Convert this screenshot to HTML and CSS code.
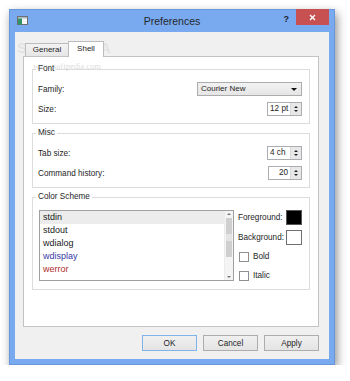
FILE: index.html
```html
<!DOCTYPE html>
<html>
<head>
<meta charset="utf-8">
<title>Preferences</title>
<link rel="stylesheet" href="styles.css">
</head>
<body>
<div class="window">
    <div class="titlebar">
        <svg class="appicon" width="11" height="9" viewBox="0 0 11 9">
            <rect x="0.5" y="0.5" width="10" height="8" fill="#f6f6f6" stroke="#6e6e6e"/>
            <rect x="1" y="1" width="9" height="1.5" fill="#a9bccc"/>
            <rect x="1" y="2.5" width="4" height="6" fill="#2f9467"/>
        </svg>
        <span class="title">Preferences</span>
        <div class="controls">
            <span class="help">?</span>
            <span class="close">
                <svg width="7" height="7" viewBox="0 0 7 7"><path d="M1 1L6 6M6 1L1 6" stroke="#fff" stroke-width="1.4"/></svg>
            </span>
        </div>
    </div>

    <div class="client">
        <div class="tabs">
            <div class="tab">General</div>
            <div class="tab selected">Shell</div>
        </div>

        <div class="pane">
            <fieldset class="group">
                <legend>Font</legend>
                <div class="row">
                    <label>Family:</label>
                    <div class="combo">Courier New<span class="arrow"></span></div>
                </div>
                <div class="row">
                    <label>Size:</label>
                    <div class="spin"><span class="value">12 pt</span><span class="spin-btns"><i class="up"></i><i class="down"></i></span></div>
                </div>
            </fieldset>

            <fieldset class="group">
                <legend>Misc</legend>
                <div class="row">
                    <label>Tab size:</label>
                    <div class="spin"><span class="value">4 ch</span><span class="spin-btns"><i class="up"></i><i class="down"></i></span></div>
                </div>
                <div class="row">
                    <label>Command history:</label>
                    <div class="spin narrow"><span class="value right">20</span><span class="spin-btns"><i class="up"></i><i class="down"></i></span></div>
                </div>
            </fieldset>

            <fieldset class="group scheme">
                <legend>Color Scheme</legend>
                <div class="scheme-body">
                    <div class="listbox">
                        <ul class="items">
                            <li class="current">stdin</li>
                            <li>stdout</li>
                            <li>wdialog</li>
                            <li class="c-display">wdisplay</li>
                            <li class="c-error">werror</li>
                        </ul>
                        <div class="scrollbar">
                            <span class="sb-up"></span>
                            <span class="sb-thumb"></span>
                            <span class="sb-down"></span>
                        </div>
                    </div>
                    <div class="props">
                        <div class="prop"><span>Foreground:</span><span class="swatch fg"></span></div>
                        <div class="prop"><span>Background:</span><span class="swatch bg"></span></div>
                        <div class="check"><span class="box"></span>Bold</div>
                        <div class="check"><span class="box"></span>Italic</div>
                    </div>
                </div>
            </fieldset>
        </div>

        <div class="actions">
            <button class="btn btn-default">OK</button>
            <button class="btn">Cancel</button>
            <button class="btn">Apply</button>
        </div>
    </div>
</div>

<div class="watermark">SOFTPEDIA</div>
<div class="watermark-url">www.softpedia.com</div>
</body>
</html>
```

FILE: styles.css
```css
body {
    margin: 0;
    background: #fff;
    font-family: "Liberation Sans", Arial, sans-serif;
    font-size: 8.2px;
    color: #1e1e1e;
}

.window {
    margin: 9px 0 0 9px;
    width: 326px;
    height: 356px;
    box-sizing: border-box;
    border: 1px solid #6897dc;
    padding: 0 5px 5px 5px;
    background: #79a9ee;
    box-shadow: 2px 4px 9px rgba(0, 0, 0, .45);
    display: flex;
    flex-direction: column;
}

/* title bar */
.titlebar {
    height: 22px;
    display: grid;
    grid-template-columns: 1fr auto 1fr;
    align-items: start;
}

.appicon {
    margin: 6px 0 0 2px;
}

.title {
    font-size: 10.5px;
    line-height: 12px;
    margin-top: 5px;
    color: #25282d;
}

.controls {
    justify-self: end;
    display: flex;
    align-items: flex-start;
}

.help {
    font-weight: bold;
    font-size: 9px;
    line-height: 10px;
    margin: 4px 7px 0 0;
    color: #1d2430;
}

.close {
    width: 33px;
    height: 16px;
    margin-top: -1px;
    background: #c75050;
    display: flex;
    align-items: center;
    justify-content: center;
}

/* client area */
.client {
    flex: 1;
    background: #f0f0f0;
    padding: 9px 10px 8px 8px;
    display: flex;
    flex-direction: column;
}

.tabs {
    display: flex;
    align-items: flex-end;
    height: 15px;
    padding-left: 2px;
    position: relative;
    z-index: 1;
}

.tab {
    box-sizing: border-box;
    height: 13px;
    width: 44px;
    border: 1px solid #bcbcbc;
    border-bottom: none;
    background: linear-gradient(#f3f3f3, #e6e6e6);
    font-size: 8px;
    line-height: 12px;
    text-align: center;
}

.tab.selected {
    width: 36px;
    height: 16px;
    margin-left: -1px;
    margin-bottom: -1px;
    background: #fff;
    line-height: 14px;
}

.pane {
    flex: 1;
    background: #fff;
    border: 1px solid #c3c3c3;
    padding: 7px 8px 0 8px;
}

/* group boxes */
.group {
    margin: 4px 0 0 0;
    border: 1px solid #dcdcdc;
    padding: 7px 7px 6px 5px;
    display: flex;
    flex-direction: column;
    gap: 4px;
}

.group:first-child {
    margin-top: 0;
}

.group legend {
    font-size: 8.2px;
    line-height: 10px;
    padding: 0 2px;
    margin-left: -2px;
}

.row {
    height: 16px;
    display: flex;
    align-items: center;
    justify-content: space-between;
}

.combo {
    box-sizing: border-box;
    width: 105px;
    height: 14px;
    border: 1px solid #acacac;
    background: linear-gradient(#f2f2f2, #e5e5e5);
    padding-left: 3px;
    font-size: 8px;
    line-height: 12px;
    display: flex;
    justify-content: space-between;
    align-items: center;
}

.combo .arrow {
    width: 0;
    height: 0;
    margin-right: 4px;
    border-left: 3px solid transparent;
    border-right: 3px solid transparent;
    border-top: 3px solid #111;
}

.spin {
    box-sizing: border-box;
    width: 35px;
    height: 14px;
    border: 1px solid #abadb3;
    background: #fff;
    display: flex;
}

.spin.narrow {
    width: 34px;
}

.spin .value {
    flex: 1;
    padding-left: 2px;
    font-size: 8.2px;
    line-height: 12px;
}

.spin .value.right {
    text-align: right;
    padding: 0 2px 0 0;
}

.spin-btns {
    width: 10px;
    border-left: 1px solid #d9d9d9;
    background: #e8e8e8;
    display: flex;
    flex-direction: column;
    justify-content: space-evenly;
    align-items: center;
}

.spin-btns i {
    width: 0;
    height: 0;
    border-left: 2px solid transparent;
    border-right: 2px solid transparent;
}

.spin-btns .up {
    border-bottom: 2px solid #222;
}

.spin-btns .down {
    border-top: 2px solid #222;
}

/* color scheme */
.scheme-body {
    display: flex;
    gap: 4px;
}

.listbox {
    box-sizing: border-box;
    width: 195px;
    height: 71px;
    margin: 1px 0 0 1px;
    border: 1px solid #a0a0a0;
    display: flex;
}

.items {
    flex: 1;
    list-style: none;
    margin: 0;
    padding: 0;
    font-size: 9px;
}

.items li {
    height: 13px;
    line-height: 13px;
    padding-left: 3px;
    color: #1a1a1a;
}

.items li.current {
    background: #ececec;
}

.items li.c-display {
    color: #3838a6;
}

.items li.c-error {
    color: #ad2d2d;
}

.scrollbar {
    width: 8px;
    background: #f4f4f4;
    border-left: 1px solid #ececec;
    display: flex;
    flex-direction: column;
    align-items: center;
}

.sb-up, .sb-down {
    width: 0;
    height: 0;
    border-left: 2px solid transparent;
    border-right: 2px solid transparent;
}

.sb-up {
    margin-top: 2px;
    border-bottom: 2px solid #777;
}

.sb-down {
    margin-top: auto;
    margin-bottom: 2px;
    border-top: 2px solid #777;
}

.sb-thumb {
    width: 6px;
    height: 39px;
    margin-top: 3px;
    background: linear-gradient(#cfcfcf 0, #cfcfcf 40%, #e4e4e4 40%, #e4e4e4 58%, #cfcfcf 58%);
}

.props {
    flex: 1;
    display: flex;
    flex-direction: column;
    gap: 4px;
}

.prop {
    height: 16px;
    display: flex;
    align-items: center;
    justify-content: space-between;
}

.swatch {
    box-sizing: border-box;
    width: 16px;
    height: 15px;
    border: 1px solid #555;
}

.swatch.fg {
    background: #000;
}

.swatch.bg {
    background: #fff;
    border-color: #6f6f6f;
}

.check {
    height: 15px;
    display: flex;
    align-items: center;
    padding-left: 1px;
}

.check .box {
    box-sizing: border-box;
    width: 10px;
    height: 10px;
    border: 1px solid #8e8f8f;
    background: #fff;
    margin-right: 4px;
}

/* dialog buttons */
.actions {
    margin-top: 8px;
    display: flex;
    justify-content: flex-end;
    gap: 6px;
}

.btn {
    box-sizing: border-box;
    width: 55px;
    height: 16px;
    padding: 0;
    border: 1px solid #adadad;
    background: linear-gradient(#f0f0f0, #e4e4e4);
    font-family: "Liberation Sans", Arial, sans-serif;
    font-size: 8.2px;
    color: #1e1e1e;
}

.btn-default {
    border-color: #7eb4ea;
}

/* watermark laid over the screenshot */
.watermark {
    position: absolute;
    left: 17px;
    top: 39px;
    font-size: 15px;
    font-weight: bold;
    letter-spacing: 1px;
    color: rgba(200, 200, 200, .35);
}

.watermark-url {
    position: absolute;
    left: 33px;
    top: 61px;
    font-family: "Liberation Serif", serif;
    font-size: 8.5px;
    color: rgba(170, 170, 170, .45);
}
```
